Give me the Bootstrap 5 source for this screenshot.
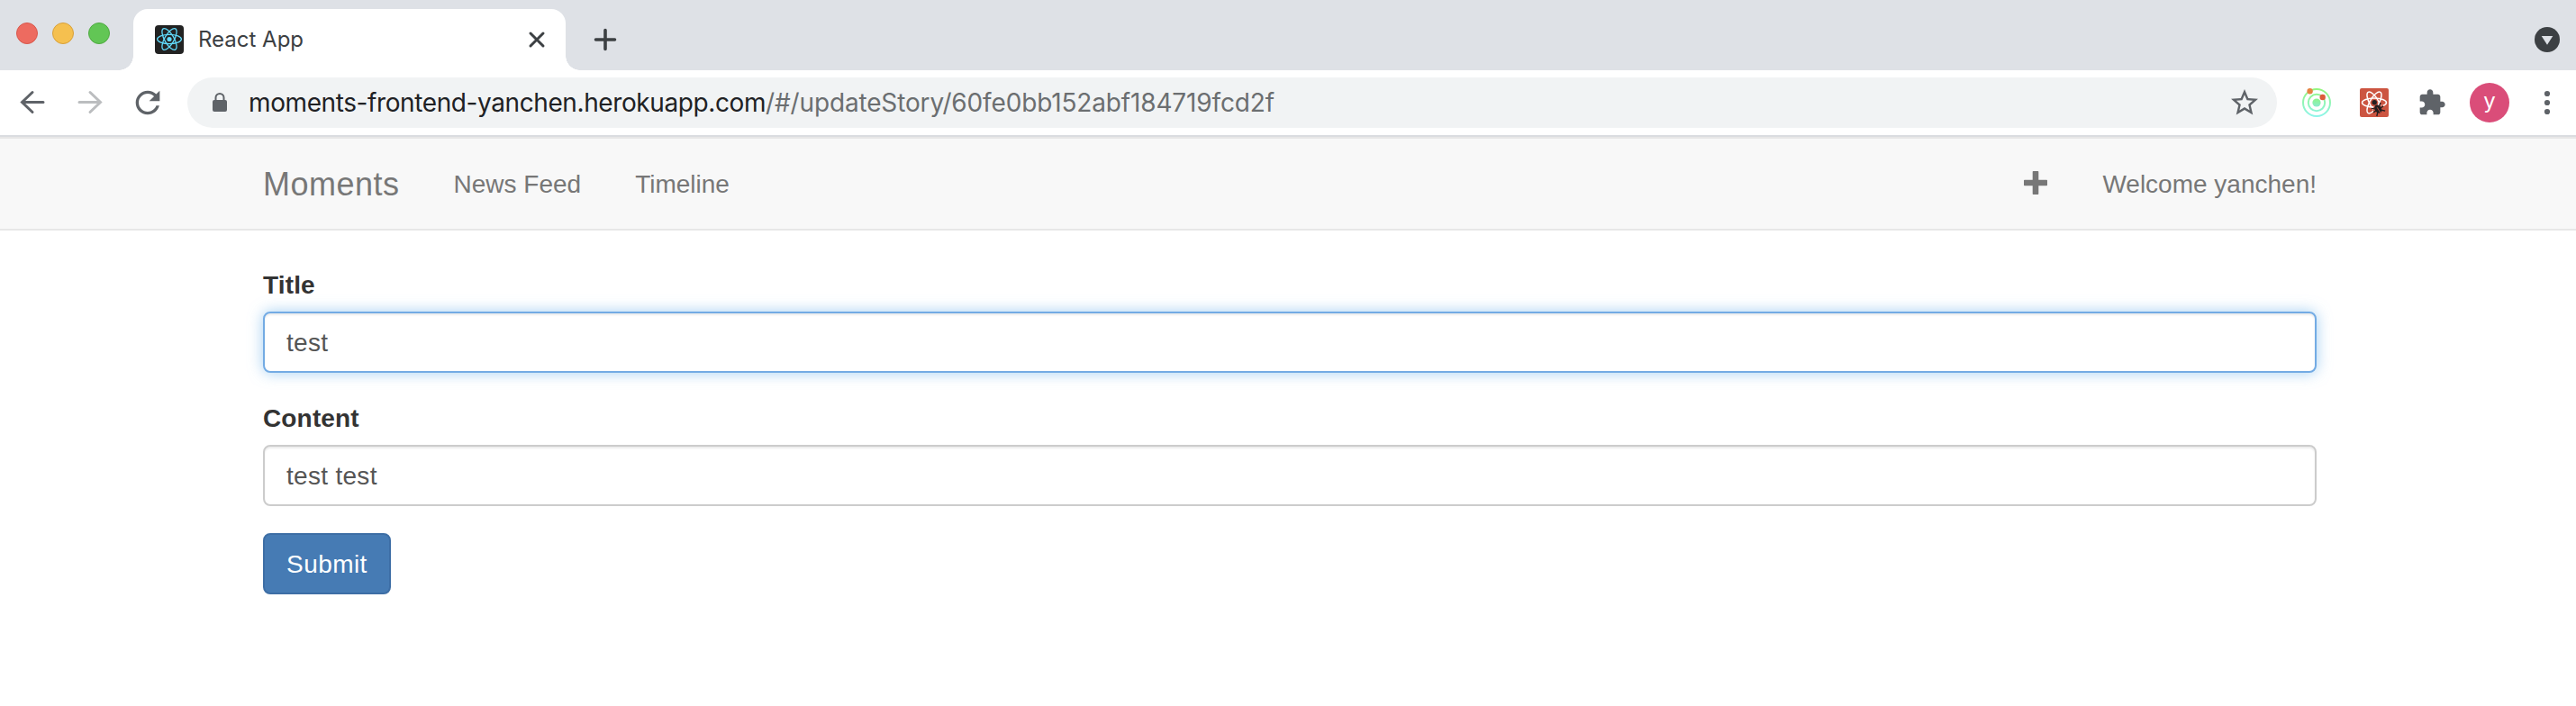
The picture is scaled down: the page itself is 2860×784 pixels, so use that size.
<!DOCTYPE html>
<html lang="en">
<head>
<meta charset="utf-8">
<title>React App</title>
<link href="https://cdn.jsdelivr.net/npm/bootstrap@5.3.0/dist/css/bootstrap.min.css" rel="stylesheet">
<style>
body{font-family:"Liberation Sans",Arial,sans-serif;font-size:28px;line-height:40px;color:#333;overflow:hidden}
svg{display:block;flex:none}
.tabstrip{height:78px;background:#dee1e6;padding-left:18px}
.lights{margin-top:25px}
.light{width:24px;height:24px;border-radius:50%;border:1px solid #d8584c;background:#ed6b60}
.light.min{background:#f5c04f;border-color:#d8a03a}
.light.max{background:#62c655;border-color:#4faa41}
.browser-tab{width:480px;height:68px;margin-left:26px;padding:0 20px 0 24px;background:#fff;border-radius:16px 16px 0 0;position:relative}
.browser-tab::before,.browser-tab::after{content:"";position:absolute;bottom:0;width:16px;height:16px}
.browser-tab::before{left:-16px;background:radial-gradient(circle at 0 0,transparent 15.5px,#fff 16px)}
.browser-tab::after{right:-16px;background:radial-gradient(circle at 100% 0,transparent 15.5px,#fff 16px)}
.tab-title{font:24px/30px Inter,sans-serif;color:#3c4043;margin-left:16px}
.new-tab{margin:28px 0 0 28px}
.tab-search{margin:30px 18px 0 0}
.toolbar{height:74px;border-bottom:2px solid #dadce0;padding:0 18px}
.forward{margin-left:28px}
.reload,.avatar{margin-left:26px}
.extension{margin-left:32px}
.extension.first-ext{margin-left:28px}
.omnibox{width:2320px;height:56px;border-radius:28px;background:#f1f3f4;margin-left:24px;padding:0 18px 0 26px}
.address{font:28px/36px Inter,sans-serif;color:#202124;margin-left:22px;letter-spacing:-.4px}
.address span{color:#6b6e70;letter-spacing:-.15px}
.avatar{width:44px;height:44px;border-radius:50%;background:#da4d79;color:#fff;font:24px/40px Inter,sans-serif;text-align:center}
.site-nav{height:104px;background:#f8f8f8;border:solid #e7e7e7;border-width:2px 0;padding:0}
.page-width{width:2280px;margin:0 auto 0 292px;padding:0}
.site-nav .navbar-brand{font-size:36px;line-height:40px;color:#777;padding:1px 0 0;margin:0 60px 0 0;letter-spacing:.5px}
.site-nav .navbar-nav{gap:60px}
.site-nav .navbar-nav .nav-link{color:#777;padding:1px 0 0;line-height:40px}
.site-nav .navbar-nav .new-story{padding:0 0 2px}
.form-label{display:block;margin:0;padding:1px 0 9px;font-weight:700;line-height:40px;letter-spacing:.15px}
.form-control,.form-control:focus{height:68px;padding:13px 24px 11px;font-size:28px;line-height:40px;letter-spacing:.3px;color:#555;border:2px solid #ccc;border-radius:8px;box-shadow:inset 0 2px 2px rgba(0,0,0,.075)}
.form-control.active-field{border-color:#73abe4;box-shadow:inset 0 2px 2px rgba(0,0,0,.075),0 0 16px rgba(102,175,233,.6)}
.field{margin-bottom:30px}
.story-form{padding-top:40px}
.btn-submit,.btn-submit:hover{height:68px;padding:13px 24px 11px;font-size:28px;line-height:40px;letter-spacing:.45px;color:#fff;background:#467bb4;border:2px solid #3d6ea5;border-radius:8px}
</style>
</head>
<body class="bg-white">
<header>
  <div class="tabstrip d-flex">
    <div class="lights d-flex gap-3"><div class="light"></div><div class="light min"></div><div class="light max"></div></div>
    <div class="browser-tab d-flex align-items-center align-self-end">
      <svg width="32" height="32" viewBox="0 0 32 32"><rect width="32" height="32" rx="4" fill="#222"/><g fill="none" stroke="#61dafb" stroke-width="1.3"><ellipse cx="16" cy="15.5" rx="13.4" ry="5.2"/><ellipse cx="16" cy="15.5" rx="13.4" ry="5.2" transform="rotate(60 16 15.5)"/><ellipse cx="16" cy="15.5" rx="13.4" ry="5.2" transform="rotate(120 16 15.5)"/></g><circle cx="16" cy="15.5" r="2.6" fill="#61dafb"/></svg>
      <span class="tab-title">React App</span>
      <svg class="ms-auto" width="24" height="24" viewBox="0 0 24 24"><path d="M5 5l14 14M19 5L5 19" stroke="#3c4043" stroke-width="3" stroke-linecap="round"/></svg>
    </div>
    <svg class="new-tab" width="32" height="32" viewBox="0 0 32 32"><path d="M16 5.500v21M5.500 16h21" stroke="#3c4043" stroke-width="3.600" stroke-linecap="round"/></svg>
    <svg class="tab-search ms-auto" width="28" height="28" viewBox="0 0 28 28"><circle cx="14" cy="14" r="14" fill="#3c4043"/><path d="M7.700 10h12.600L14 19.700z" fill="#dee1e6"/></svg>
  </div>
  <div class="toolbar d-flex align-items-center">
    <svg width="36" height="36" viewBox="0 0 36 36" fill="none" stroke="#5f6368" stroke-width="3" stroke-linecap="round"><path d="M30 17.500H7M18 6.500L6.500 17.500L18 28.500"/></svg>
    <svg class="forward" width="36" height="36" viewBox="0 0 36 36" fill="none" stroke="#bbbdbf" stroke-width="3" stroke-linecap="round"><path d="M6 17.500H29M18 6.500L29.500 17.500L18 28.500"/></svg>
    <svg class="reload" width="40" height="40" viewBox="0 0 24 24" fill="#5f6368"><path d="M17.650 6.350C16.200 4.900 14.210 4 12 4c-4.420 0-7.990 3.580-7.990 8s3.570 8 7.990 8c3.730 0 6.840-2.550 7.730-6h-2.080c-.820 2.330-3.040 4-5.650 4-3.310 0-6-2.690-6-6s2.690-6 6-6c1.660 0 3.140.690 4.220 1.780L13 11h7V4z"/></svg>
    <div class="omnibox d-flex align-items-center">
      <svg width="20" height="24" viewBox="0 0 20 24"><rect x="2" y="9" width="16" height="13" rx="2" fill="#5f6368"/><path d="M5.500 10V6.500a4.500 4.500 0 0 1 9 0V10" fill="none" stroke="#5f6368" stroke-width="2"/></svg>
      <div class="address text-nowrap">moments-frontend-yanchen.herokuapp.com<span>/#/updateStory/60fe0bb152abf184719fcd2f</span></div>
      <svg class="ms-auto" width="36" height="36" viewBox="0 0 24 24" fill="#5f6368"><path d="M22 9.240l-7.190-.620L12 2 9.190 8.630 2 9.240l5.460 4.730L5.820 21 12 17.270 18.180 21l-1.630-7.030L22 9.240zM12 15.400l-3.760 2.270 1-4.280-3.320-2.880 4.380-.380L12 6.100l1.710 4.040 4.380.380-3.320 2.880 1 4.280L12 15.400z"/></svg>
    </div>
    <svg class="extension first-ext" width="32" height="32" viewBox="0 0 32 32"><defs><linearGradient id="orbit" x1="0" y1="0" x2="0" y2="32" gradientUnits="userSpaceOnUse"><stop stop-color="#94f57c"/><stop offset="1" stop-color="#8df5ed"/></linearGradient><linearGradient id="core" x1="0" y1="0" x2="0" y2="1"><stop stop-color="#8df58a"/><stop offset="1" stop-color="#8cebd0"/></linearGradient></defs><g fill="none" stroke="url(#orbit)" stroke-width="2"><circle cx="16" cy="16" r="15"/><circle cx="16" cy="16" r="9.200"/></g><circle cx="16" cy="16" r="4.600" fill="url(#core)"/><circle cx="8.600" cy="3.200" r="3.200" fill="#e68442"/><circle cx="22.700" cy="10" r="3.200" fill="#dc5d3b"/></svg>
    <svg class="extension" width="32" height="32" viewBox="0 0 32 32"><rect width="32" height="32" rx="2" fill="#cc5541"/><g fill="none" stroke="#fff" stroke-width="1.500"><ellipse cx="16" cy="16" rx="13.500" ry="5"/><ellipse cx="16" cy="16" rx="13.500" ry="5" transform="rotate(60 16 16)"/><ellipse cx="16" cy="16" rx="13.500" ry="5" transform="rotate(120 16 16)"/></g><path d="M15 20.500l11-1.500 3 11-9 1-5-3z" fill="#cc5541"/><g transform="translate(20.300 23) rotate(-32)"><ellipse rx="3.600" ry="5" fill="#231f20"/><path d="M-6-4.500l3 2.500M6-4.500L3-2M-6.500.5H6.500M-5.500 6l3-3M5.500 6l-3-3" stroke="#231f20" stroke-width="1.400"/><path d="M0-2v7" stroke="#cc5541" stroke-width=".8"/></g><circle cx="16.200" cy="15.800" r="2.700" fill="#231f20"/></svg>
    <svg class="extension" width="32" height="32" viewBox="0 0 24 24" fill="#5f6368"><path d="M20.500 11H19V7c0-1.100-.900-2-2-2h-4V3.500C13 2.120 11.880 1 10.500 1S8 2.120 8 3.500V5H4c-1.100 0-1.990.900-1.990 2v3.800H3.500c1.490 0 2.700 1.210 2.700 2.700s-1.210 2.700-2.700 2.700H2V20c0 1.100.900 2 2 2h3.800v-1.500c0-1.490 1.210-2.700 2.700-2.700s2.700 1.210 2.700 2.700V22H17c1.100 0 2-.900 2-2v-4h1.500c1.380 0 2.500-1.120 2.500-2.500S21.880 11 20.500 11z"/></svg>
    <div class="avatar">y</div>
    <svg class="ms-auto" width="28" height="32" viewBox="0 0 28 32" fill="#5f6368"><circle cx="14" cy="6" r="3.100"/><circle cx="14" cy="16" r="3.100"/><circle cx="14" cy="26" r="3.100"/></svg>
  </div>
</header>
<nav class="navbar navbar-expand site-nav">
  <div class="page-width d-flex align-items-center">
    <a class="navbar-brand" href="#">Moments</a>
    <div class="navbar-nav"><a class="nav-link" href="#">News Feed</a><a class="nav-link" href="#">Timeline</a></div>
    <div class="navbar-nav ms-auto align-items-center">
      <a class="nav-link new-story" href="#" aria-label="New story"><svg width="28" height="28" viewBox="0 0 28 28"><path d="M11.500 1h5a.8.8 0 0 1 .8.8v8.900h8.900a.8.8 0 0 1 .8.800v5a.8.8 0 0 1-.8.800h-8.900v8.900a.8.8 0 0 1-.8.800h-5a.8.8 0 0 1-.8-.8v-8.900H1.800a.8.8 0 0 1-.8-.8v-5a.8.8 0 0 1 .8-.8h8.900V1.800a.8.8 0 0 1 .8-.8z" fill="#777"/></svg></a>
      <a class="nav-link" href="#">Welcome yanchen!</a>
    </div>
  </div>
</nav>
<main class="page-width story-form">
  <form>
    <div class="field"><label class="form-label" for="title">Title</label><input class="form-control active-field" id="title" type="text" value="test"></div>
    <div class="field"><label class="form-label" for="content">Content</label><input class="form-control" id="content" type="text" value="test test"></div>
    <button class="btn btn-submit" type="button">Submit</button>
  </form>
</main>
<script src="https://cdn.jsdelivr.net/npm/bootstrap@5.3.0/dist/js/bootstrap.bundle.min.js"></script>
</body>
</html>
